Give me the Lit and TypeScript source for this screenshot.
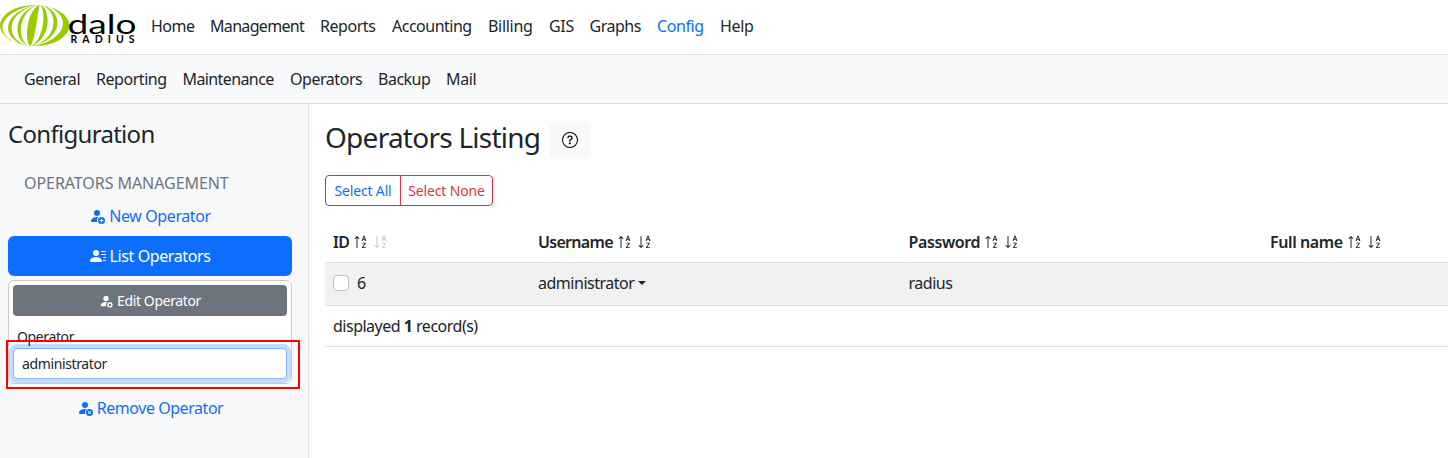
import { LitElement, html, css, svg } from "lit";
import { customElement } from "lit/decorators.js";

const BODY = "M2 13c0 1 1 1 1 1h5.256A4.493 4.493 0 0 1 8 12.5a4.49 4.49 0 0 1 1.544-3.393C9.077 9.038 8.564 9 8 9c-5 0-6 3-6 4Z";
const HEAD = "M11 5a3 3 0 1 1-6 0 3 3 0 0 1 6 0Z";
const AZ = "M10.082 5.629 9.664 7H8.598l1.789-5.332h1.234L13.402 7h-1.12l-.419-1.371h-1.781zm1.57-.785L11 2.687h-.047l-.652 2.157h1.351zM12.96 14H9.028v-.691l2.579-3.72v-.054H9.098v-.867h3.785v.691l-2.567 3.72v.054h2.645V14z";
const ICONS: Record<string, string> = {
  add: HEAD + BODY + "M12.5 16a3.5 3.5 0 1 0 0-7 3.5 3.5 0 0 0 0 7Zm.5-5v1h1a.5.5 0 0 1 0 1h-1v1a.5.5 0 0 1-1 0v-1h-1a.5.5 0 0 1 0-1h1v-1a.5.5 0 0 1 1 0Z",
  remove: HEAD + BODY + "M12.5 16a3.5 3.5 0 1 0 0-7 3.5 3.5 0 0 0 0 7Zm-.646-4.854.646.647.646-.647a.5.5 0 0 1 .708.708l-.647.646.647.646a.5.5 0 0 1-.708.708l-.646-.647-.646.647a.5.5 0 0 1-.708-.708l.647-.646-.647-.646a.5.5 0 0 1 .708-.708Z",
  gear: HEAD + BODY + "M11.886 9.46c.18-.613 1.048-.613 1.229 0l.043.148a.64.64 0 0 0 .921.382l.136-.074c.561-.306 1.175.308.87.869l-.075.136a.64.64 0 0 0 .382.92l.149.045c.612.18.612 1.048 0 1.229l-.15.043a.64.64 0 0 0-.38.921l.074.136c.305.561-.309 1.175-.87.87l-.136-.075a.64.64 0 0 0-.92.382l-.045.149c-.18.612-1.048.612-1.229 0l-.043-.15a.64.64 0 0 0-.921-.38l-.136.074c-.561.305-1.175-.309-.87-.87l.075-.136a.64.64 0 0 0-.382-.92l-.148-.045c-.613-.18-.613-1.048 0-1.229l.148-.043a.64.64 0 0 0 .382-.921l-.074-.136c-.306-.561.308-1.175.869-.87l.136.075a.64.64 0 0 0 .92-.382l.045-.148ZM14 12.5a1.5 1.5 0 1 0-3 0 1.5 1.5 0 0 0 3 0Z",
  lines: "M6 8a3 3 0 1 0 0-6 3 3 0 0 0 0 6m-5 6s-1 0-1-1 1-4 6-4 6 3 6 4-1 1-1 1zM11 3.5a.5.5 0 0 1 .5-.5h4a.5.5 0 0 1 0 1h-4a.5.5 0 0 1-.5-.5m.5 2.5a.5.5 0 0 0 0 1h4a.5.5 0 0 0 0-1zm2 3a.5.5 0 0 0 0 1h2a.5.5 0 0 0 0-1zm0 3a.5.5 0 0 0 0 1h2a.5.5 0 0 0 0-1z",
  up: AZ + "M4.5 13.5a.5.5 0 0 1-1 0V3.707L2.354 4.854a.5.5 0 1 1-.708-.708l2-1.999.007-.007a.498.498 0 0 1 .7.006l2 2a.5.5 0 1 1-.707.708L4.5 3.707V13.5z",
  down: AZ + "M4.5 2.5a.5.5 0 0 0-1 0v9.793l-1.146-1.147a.5.5 0 0 0-.708.708l2 1.999.007.007a.497.497 0 0 0 .7-.006l2-2a.5.5 0 0 0-.707-.708L4.5 12.293V2.5z",
  help: "M8 15A7 7 0 1 1 8 1a7 7 0 0 1 0 14zm0 1A8 8 0 1 0 8 0a8 8 0 0 0 0 16zM5.255 5.786a.237.237 0 0 0 .241.247h.825c.138 0 .248-.113.266-.25.09-.656.54-1.134 1.342-1.134.686 0 1.314.343 1.314 1.168 0 .635-.374.927-.965 1.371-.673.489-1.206 1.06-1.168 1.987l.003.217a.25.25 0 0 0 .25.246h.811a.25.25 0 0 0 .25-.25v-.105c0-.718.273-.927 1.01-1.486.609-.463 1.244-.977 1.244-2.056 0-1.511-1.276-2.241-2.673-2.241-1.267 0-2.655.59-2.75 2.286zm1.557 5.763c0 .533.425.927 1.01.927.609 0 1.028-.394 1.028-.927 0-.552-.42-.94-1.029-.94-.584 0-1.009.388-1.009.94z",
};
const icon = (name: string, cls = "") =>
  html`<svg class="icon ${cls}" viewBox="0 0 16 16">${svg`<path d=${ICONS[name]} />`}</svg>`;

// White meridians of the globe: left and right edge at the equator.
const GAPS = [[3.5, 7.5], [12.5, 17], [22, 27], [37, 42], [48, 52.5], [58, 62]];
const bend = (m: number) => (8 * m - 70) / 6;
const meridian = ([a, b]: number[]) =>
  `M40 4C${bend(a)} 11 ${bend(a) - 2} 40 30 47C${bend(b)} 40 ${bend(b) + 2} 11 40 4Z`;

// [label, width of the item, letter spacing]
type Item = [string, number, number];
const MAIN: Item[] = [["Home", 43, -0.5], ["Management", 94, -0.68], ["Reports", 56, -0.45], ["Accounting", 80, -0.5], ["Billing", 45, -0.3], ["GIS", 24.5, -0.3], ["Graphs", 51.5, -0.5], ["Config", 47, -0.4], ["Help", 34, -0.3]];
const SUB: Item[] = [["General", 56, -0.4], ["Reporting", 70.5, -0.45], ["Maintenance", 91.5, -0.6], ["Operators", 72, -0.45], ["Backup", 52, -0.5], ["Mail", 31, -0.35]];
const items = (list: Item[]) =>
  list.map(([t, w, s]) => html`<span class=${t === "Config" ? "active" : ""} style="width:${w}px;letter-spacing:${s}px">${t}</span>`);
// [heading, letter spacing]
const COLS: [string, number][] = [["ID", -0.6], ["Username", -0.7], ["Password", -0.4], ["Full name", -0.4]];

@customElement("app-root")
export class AppRoot extends LitElement {
  static styles = css`
    :host { display: flex; flex-direction: column; height: 458px; overflow: hidden; background: #fff; color: #212529; font: 16px/24px "Noto Sans", sans-serif; letter-spacing: -0.4px; }
    * { box-sizing: border-box; }
    .top { display: flex; align-items: center; height: 55px; flex: none; border-bottom: 1px solid #dee2e6; }
    .top .nav { padding-bottom: 2px; }
    .logo { width: 136px; height: 54px; margin-right: 15px; display: block; flex: none; }
    .nav { display: flex; gap: 16px; }
    .nav span { white-space: nowrap; }
    .active { color: #0d6efd; }
    .sub { display: flex; align-items: center; height: 49px; flex: none; padding-left: 24px; background: #f8f9fa; border-bottom: 1px solid #dee2e6; }
    .body { display: flex; flex: 1; min-height: 0; }
    .side { width: 309px; flex: none; background: #f8f9fa; border-right: 1px solid #dee2e6; padding: 15px 16px 0 8px; }
    h1, h2 { margin: 0; font-weight: 400; }
    h1 { font-size: 28px; line-height: 34px; letter-spacing: -0.75px; padding-bottom: 7px; }
    h2 { font-size: 24px; line-height: 29px; letter-spacing: -0.7px; }
    .group { margin-top: 23px; padding: 0 16px; color: #6c757d; height: 25px; letter-spacing: -0.06px; }
    .link { display: flex; align-items: center; justify-content: center; gap: 4px; height: 40px; border-radius: 6px; color: #0d6efd; }
    .link.on { background: #0d6efd; color: #fff; }
    .link.last { margin-top: 4px; letter-spacing: -0.45px; }
    .icon { width: 16px; height: 16px; fill: currentColor; flex: none; display: block; }
    .box { margin-top: 4px; height: 104px; padding: 4px; border: 1px solid #ccc; border-radius: 6px; background: #fff; font-size: 14px; line-height: 21px; letter-spacing: -0.38px; }
    .edit { display: flex; align-items: center; justify-content: center; gap: 4px; height: 31px; border-radius: 4px; background: #6c757d; color: #fff; }
    .icon.s { width: 14px; height: 14px; }
    .label { display: block; margin: 10px 0 0 4px; height: 22px; }
    .input { display: flex; align-items: center; height: 31px; padding: 0 8px; border: 1px solid #86b7fe; border-radius: 4px; background: #fff; box-shadow: 0 0 0 4px rgba(13,110,253,.25); }
    .mark { position: absolute; left: 6px; top: 340px; width: 294px; height: 49px; border: 2px solid #f00; }
    .main { flex: 1; min-width: 0; padding: 17px 0 0 16px; }
    .title { display: flex; align-items: center; gap: 9px; height: 38px; }
    .help { display: flex; align-items: center; justify-content: center; width: 42px; height: 38px; border-radius: 6px; background: #f8f9fa; color: #000; }
    .btns { display: flex; margin-top: 16px; height: 31px; font-size: 14px; line-height: 30px; letter-spacing: -0.15px; }
    .btn { border: 1px solid #0d6efd; color: #0d6efd; border-radius: 4px 0 0 4px; width: 76px; text-align: center; white-space: nowrap; }
    .btn.none { border-color: #dc3545; color: #dc3545; border-radius: 0 4px 4px 0; margin-left: -1px; width: 93px; }
    .row { display: grid; grid-template-columns: 205px 370.5px 361.5px 1fr; align-items: center; padding-left: 8px; border-bottom: 1px solid #dee2e6; }
    .head { margin-top: 16px; height: 41px; font-weight: 600; }
    .data { height: 43px; background: #f1f1f1; padding-bottom: 2px; letter-spacing: -0.48px; }
    .foot { height: 41px; letter-spacing: -0.5px; }
    .foot b { font-weight: 700; }
    .cell { display: flex; align-items: center; white-space: pre; }
    .icon.first { margin-left: 4px; }
    .icon.next { margin-left: 4px; }
    .icon.dim { opacity: .25; }
    .check { width: 16px; height: 16px; border: 1px solid #bfbfbf; border-radius: 4px; background: #fff; margin-right: 8px; }
    .caret { border: 4.8px solid transparent; border-top-color: currentColor; border-bottom: 0; margin-left: 4px; }
    .word { font: 400 26px Lato, sans-serif; letter-spacing: 0; fill: #000; }
    .tag { font: 700 10.5px Lato, sans-serif; letter-spacing: 0; fill: #000; }
  `;

  render() {
    return html`
      <header class="top">
        <svg class="logo" viewBox="0 0 136 54">
          <clipPath id="globe"><ellipse cx="34.7" cy="25.5" rx="34.7" ry="20.5" /></clipPath>
          <g clip-path="url(#globe)">
            <rect width="70" height="54" fill="#99cc00" />
            ${GAPS.map((g) => svg`<path fill="#fff" d=${meridian(g)} />`)}
          </g>
          <text class="word" x="67.5" y="34" textLength="69" lengthAdjust="spacingAndGlyphs">dalo</text>
          <text class="tag" x="70.5" y="43.3" textLength="64">RADIUS</text>
        </svg>
        <nav class="nav">${items(MAIN)}</nav>
      </header>
      <nav class="sub nav">${items(SUB)}</nav>
      <div class="body">
        <aside class="side">
          <h2>Configuration</h2>
          <div class="group">OPERATORS MANAGEMENT</div>
          <div class="link">${icon("add")}<span>New Operator</span></div>
          <div class="link on">${icon("lines")}<span>List Operators</span></div>
          <div class="box">
            <div class="edit">${icon("gear", "s")}<span>Edit Operator</span></div>
            <span class="label">Operator</span>
            <div class="input">administrator</div>
          </div>
          <div class="link last">${icon("remove")}<span>Remove Operator</span></div>
        </aside>
        <main class="main">
          <div class="title"><h1>Operators Listing</h1><span class="help">${icon("help")}</span></div>
          <div class="btns"><span class="btn">Select All</span><span class="btn none">Select None</span></div>
          <div class="row head">${COLS.map(([c, s]) => html`<div class="cell"><span style="letter-spacing:${s}px">${c}</span>${icon("up", "first")}${icon("down", c === "ID" ? "next dim" : "next")}</div>`)}</div>
          <div class="row data">
            <div class="cell"><span class="check"></span>6</div>
            <div class="cell">administrator<span class="caret"></span></div>
            <div class="cell">radius</div>
          </div>
          <div class="row foot"><div class="cell">displayed <b>1</b> record(s)</div></div>
        </main>
      </div>
      <div class="mark"></div>
    `;
  }
}
